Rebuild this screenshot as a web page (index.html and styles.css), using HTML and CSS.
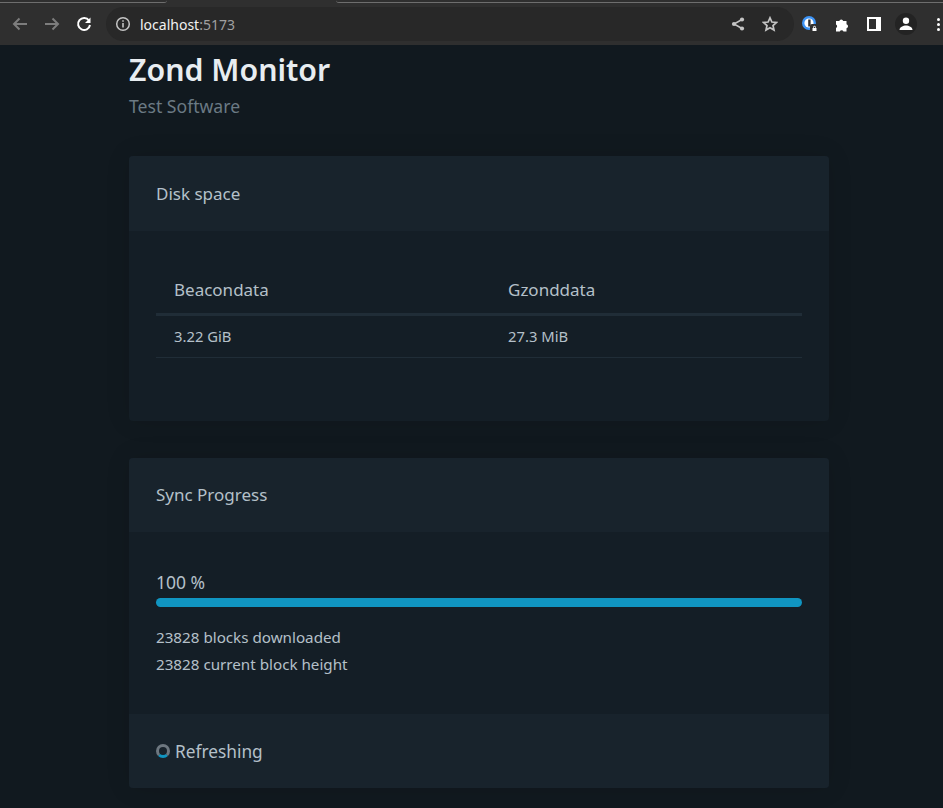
FILE: index.html
```html
<!DOCTYPE html>
<html lang="en">
<head>
  <meta charset="UTF-8">
  <title>Zond Monitor</title>
  <link rel="stylesheet" href="styles.css">
</head>
<body>

  <div class="tabstrip">
    <div class="tab-edge left"></div>
    <div class="tab-gap"></div>
    <div class="tab-edge right"></div>
  </div>
  <header class="toolbar">
    <svg class="nav-icon" viewBox="0 0 24 24" width="24" height="24"><path class="stroke dim" d="M19 12H6M11.500 6.500 6 12l5.500 5.500"/></svg>
    <svg class="nav-icon" viewBox="0 0 24 24" width="24" height="24"><path class="stroke dim" d="M5 12h13M12.500 6.500 18 12l-5.500 5.500"/></svg>
    <svg class="nav-icon" viewBox="0 0 24 24" width="24" height="24"><path class="stroke white" d="M17 8.500A6 6 0 1 0 18 13"/><path class="fill-white" d="M18.500 5.500v5.500H13z"/></svg>
    <div class="omnibox">
      <svg viewBox="0 0 16 16" width="16" height="16"><circle class="thin" cx="8" cy="8" r="6.300"/><path class="fill-grey" d="M7.200 7h1.600v4.600H7.200zM7.200 4.200h1.600v1.600H7.200z"/></svg>
      <span class="url">localhost<span class="port">:5173</span></span>
      <span class="omni-space"></span>
      <svg viewBox="0 0 16 16" width="16" height="16"><path class="thin" d="M12 3.500 4 8l8 4.500"/><circle class="fill-grey" cx="12" cy="3.500" r="2.100"/><circle class="fill-grey" cx="4" cy="8" r="2.100"/><circle class="fill-grey" cx="12" cy="12.500" r="2.100"/></svg>
      <svg viewBox="0 0 16 16" width="16" height="16"><path class="star" d="m8 1.800 1.900 4.200 4.500.5-3.400 3 1 4.500L8 11.700 4 14l1-4.500-3.400-3 4.500-.5z"/></svg>
    </div>
    <div class="ext-icons">
      <svg viewBox="0 0 18 18" width="18" height="18">
        <circle class="fill-blue" cx="8" cy="8" r="7"/>
        <circle class="fill-white" cx="8" cy="8" r="4.600"/>
        <path class="fill-dark" d="M7.200 4.500h2.400v7H7.200z"/>
        <rect class="fill-dark" x="9" y="9" width="9" height="9" rx="2"/>
        <path class="fill-white" d="M11.500 13h4v3h-4zM12.300 13v-1a1.200 1.200 0 0 1 2.400 0v1h-.7v-1a.5.5 0 0 0-1 0v1z"/>
      </svg>
      <svg class="puzzle" viewBox="0 0 16 16" width="16" height="16"><path class="fill-white" d="M1 5h3.300a2 2 0 0 1 3.900 0h3.300v3.300a2 2 0 0 1 0 3.900v3.300H8.500a2 2 0 0 0-3.700 0H1v-3.500a2 2 0 0 0 0-3.600z"/></svg>
      <svg viewBox="0 0 16 16" width="16" height="16"><path class="fill-white" fill-rule="evenodd" d="M1 1h14v14H1zM3 3v10h7V3z"/></svg>
      <span class="avatar">
        <svg viewBox="0 0 16 16" width="16" height="16"><circle class="fill-white" cx="8" cy="4.800" r="3.200"/><path class="fill-white" d="M1.500 14c0-3 3.700-4.500 6.500-4.500s6.500 1.500 6.500 4.500z"/></svg>
      </span>
      <span class="kebab"><i></i><i></i><i></i></span>
    </div>
  </header>

  <main class="container">
    <hgroup class="title">
      <h1>Zond Monitor</h1>
      <p>Test Software</p>
    </hgroup>

    <article class="card disk">
      <header class="card-head">Disk space</header>
      <div class="card-body">
        <table>
          <thead>
            <tr><th class="col-first">Beacondata</th><th>Gzonddata</th></tr>
          </thead>
          <tbody>
            <tr><td>3.22 GiB</td><td>27.3 MiB</td></tr>
          </tbody>
        </table>
      </div>
    </article>

    <article class="card sync">
      <header class="card-head">Sync Progress</header>
      <div class="card-body">
        <div class="percent">100 %</div>
        <div class="progress"></div>
        <p class="stat">23828 blocks downloaded</p>
        <p class="stat">23828 current block height</p>
      </div>
      <footer class="card-foot"><span class="spinner"></span>Refreshing</footer>
    </article>
  </main>

</body>
</html>
```

FILE: styles.css
```css
* {
  box-sizing: border-box;
}
html, body {
  margin: 0;
  height: 808px;
  overflow: hidden;
}
body {
  background: #11191f;
  color: #b4c0c9;
  font-family: "Noto Sans", sans-serif;
}

/* browser chrome */
.tabstrip {
  height: 3px;
  background: #2f2f2f;
  display: flex;
}
.tab-edge {
  height: 3px;
  border-bottom: 1px solid #6e6e6e;
}
.tab-edge.left {
  width: 167px;
  border-bottom-right-radius: 3px;
}
.tab-gap {
  width: 169px;
}
.tab-edge.right {
  flex: 1;
  border-bottom-left-radius: 3px;
}
.toolbar {
  height: 42px;
  background: #2f2f2f;
  display: flex;
  align-items: center;
  padding-left: 8px;
}
.nav-icon {
  margin-right: 8px;
  flex: none;
}
.stroke {
  fill: none;
  stroke-width: 2;
}
.dim {
  stroke: #7d7d7d;
}
.white {
  stroke: #fff;
}
.fill-white {
  fill: #fff;
}
.fill-grey {
  fill: #c4c4c4;
}
.fill-blue {
  fill: #3d94f6;
}
.fill-dark {
  fill: #2f2f2f;
}
.thin {
  fill: none;
  stroke: #c4c4c4;
  stroke-width: 1.500;
}
.star {
  fill: none;
  stroke: #c4c4c4;
  stroke-width: 1.700;
}
.omnibox {
  width: 688px;
  height: 34px;
  margin-left: 2px;
  border-radius: 17px;
  background: #282828;
  display: flex;
  align-items: center;
  gap: 16px;
  padding: 0 16px 0 9px;
  flex: none;
}
.url {
  font-size: 14px;
  color: #f1f1f1;
  margin-left: -7px;
}
.port {
  color: #a0a0a0;
}
.omni-space {
  flex: 1;
}
.ext-icons {
  display: flex;
  align-items: center;
  margin-left: 7px;
  gap: 15px;
}
.ext-icons svg {
  flex: none;
}
.puzzle {
  margin-left: 1px;
}
.avatar {
  width: 22px;
  height: 22px;
  margin-left: -2px;
  border-radius: 50%;
  background: #232323;
  display: flex;
  align-items: center;
  justify-content: center;
  flex: none;
}
.kebab {
  display: flex;
  flex-direction: column;
  gap: 2px;
  margin-left: 5px;
  flex: none;
}
.kebab i {
  display: block;
  width: 3px;
  height: 3px;
  background: #fff;
  border-radius: 50%;
}

/* page */
.container {
  width: 700px;
  margin-left: 129px;
}
.title {
  margin: 0;
  padding-top: 4px;
}
.title h1 {
  margin: 0;
  font-size: 30.300px;
  line-height: 41px;
  font-weight: 600;
  color: #e8edf1;
}
.title p {
  margin: 4px 0 0;
  font-size: 17.600px;
  line-height: 24px;
  color: #6b7a84;
}
.card {
  background: #141e26;
  border-radius: 4px;
  box-shadow: 0 0 24px rgba(0, 0, 0, .12);
}
.disk {
  height: 265px;
  margin-top: 38px;
}
.sync {
  margin-top: 37px;
}
.card-head, .card-foot {
  background: #18232c;
  padding: 0 27px;
  display: flex;
  align-items: center;
  font-size: 17px;
}
.card-head {
  height: 75px;
  border-radius: 4px 4px 0 0;
}
.sync .card-head {
  height: 74px;
  padding-bottom: 2px;
}
.card-foot {
  height: 74px;
  border-radius: 0 0 4px 4px;
  font-size: 17.300px;
}
.card-body {
  padding: 0 27px;
}
.disk .card-body {
  padding-top: 37px;
}
.sync .card-body {
  height: 182px;
  padding-top: 38px;
}
table {
  width: 100%;
  border-collapse: collapse;
  table-layout: fixed;
}
.col-first {
  width: 334px;
}
th {
  text-align: left;
  font-weight: 400;
  font-size: 17px;
  height: 46px;
  padding: 0 18px 2px;
  border-bottom: 3px solid #202d37;
}
td {
  font-size: 14.800px;
  height: 43px;
  padding: 0 18px;
  border-bottom: 1px solid #202d37;
}
.percent {
  font-size: 17.500px;
  line-height: 24px;
}
.progress {
  height: 9px;
  margin-top: 4px;
  background: #1095c1;
  border-radius: 5px;
}
.stat {
  margin: 0;
  font-size: 15.200px;
  line-height: 27px;
}
.progress + .stat {
  margin-top: 17px;
}
.spinner {
  width: 14px;
  height: 14px;
  margin-right: 5px;
  border-radius: 50%;
  border: 3px solid #6d7780;
  border-bottom-color: #1095c1;
}
```
